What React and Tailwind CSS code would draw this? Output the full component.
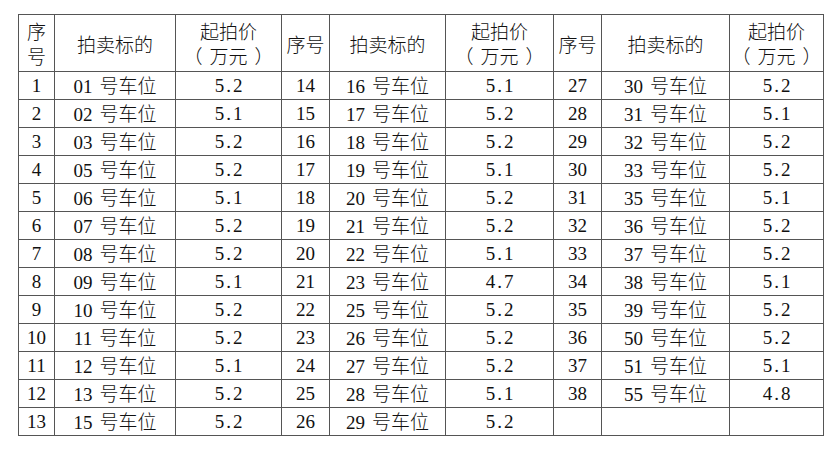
import React from "react";

const rows = [
  [1, "01", "5.2", 14, "16", "5.1", 27, "30", "5.2"],
  [2, "02", "5.1", 15, "17", "5.2", 28, "31", "5.1"],
  [3, "03", "5.2", 16, "18", "5.2", 29, "32", "5.2"],
  [4, "05", "5.2", 17, "19", "5.1", 30, "33", "5.2"],
  [5, "06", "5.1", 18, "20", "5.2", 31, "35", "5.1"],
  [6, "07", "5.2", 19, "21", "5.2", 32, "36", "5.2"],
  [7, "08", "5.2", 20, "22", "5.1", 33, "37", "5.2"],
  [8, "09", "5.1", 21, "23", "4.7", 34, "38", "5.1"],
  [9, "10", "5.2", 22, "25", "5.2", 35, "39", "5.2"],
  [10, "11", "5.2", 23, "26", "5.2", 36, "50", "5.2"],
  [11, "12", "5.1", 24, "27", "5.2", 37, "51", "5.1"],
  [12, "13", "5.2", 25, "28", "5.1", 38, "55", "4.8"],
  [13, "15", "5.2", 26, "29", "5.2", null, null, null],
];

const widths = ["w-[36px]", "w-[121px]", "w-[106px]", "w-[48px]", "w-[116px]", "w-[108px]", "w-[48px]", "w-[128px]", "w-[94px]"];

const cell = "border border-[#555] text-center align-middle p-0";
const cjk = { fontFamily: '"Noto Sans CJK SC", sans-serif' };

const Price = ({ v }) => <span className="tracking-[2px] pl-[2px]">{v}</span>;

const Lot = ({ n }) => (
  <span>
    {n}
    <span className="font-light ml-[7px]" style={cjk}>号车位</span>
  </span>
);

const Unit = () => (
  <span className="inline-flex">
    <span className="mr-[7px]">（</span>
    万元
    <span className="ml-[7px]">）</span>
  </span>
);

export default function App() {
  return (
    <div className="bg-white min-h-[449px] w-[837px] pt-[14px] pl-[18px] text-[#111]"
      style={{ fontFamily: '"Liberation Serif", "Noto Sans CJK SC", serif' }}>
      <table className="table-fixed border-collapse w-[805px] text-[19px] leading-[22px]">
        <colgroup>
          {widths.map((w, i) => <col key={i} className={w} />)}
        </colgroup>
        <thead>
          <tr className="h-[57px] leading-[25px]">
            {[0, 1, 2].map((g) => (
              <React.Fragment key={g}>
                <th className={`${cell} font-light`} style={cjk}>
                  {g === 0 ? <>序<br />号</> : "序号"}
                </th>
                <th className={`${cell} font-light`} style={cjk}>拍卖标的</th>
                <th className={`${cell} font-light`} style={cjk}>
                  起拍价<br /><Unit />
                </th>
              </React.Fragment>
            ))}
          </tr>
        </thead>
        <tbody>
          {rows.map((r, i) => (
            <tr key={i} className="h-[28px]">
              {[0, 1, 2].map((g) => (
                <React.Fragment key={g}>
                  <td className={cell}>{r[g * 3]}</td>
                  <td className={cell}>{r[g * 3 + 1] && <Lot n={r[g * 3 + 1]} />}</td>
                  <td className={cell}>{r[g * 3 + 2] && <Price v={r[g * 3 + 2]} />}</td>
                </React.Fragment>
              ))}
            </tr>
          ))}
        </tbody>
      </table>
    </div>
  );
}
